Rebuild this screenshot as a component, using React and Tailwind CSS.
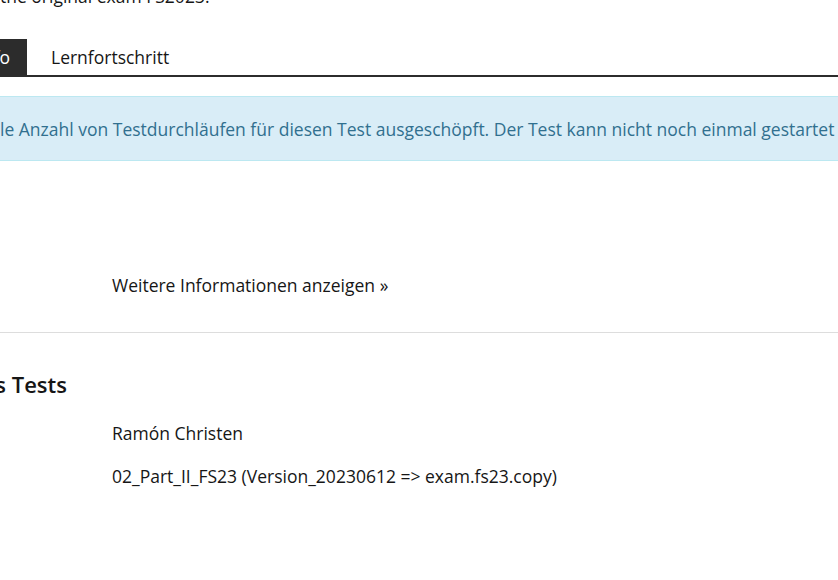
export default function App() {
  return (
    <div className="w-[838px] h-[580px] overflow-hidden bg-white text-[#161616] text-[17.5px] leading-[26px]" style={{ fontFamily: '"Open Sans", "Liberation Sans", sans-serif' }}>
      {/* intro text, mostly scrolled out of view */}
      <p className="-mt-[17px] whitespace-nowrap">the original exam FS2023.</p>

      {/* tabs */}
      <div className="mt-[30px] flex border-b-2 border-[#2c2c2c]">
        <div className="h-[36px] w-[27px] shrink-0 bg-[#2c2c2c] text-white flex items-center justify-end pr-[17px] whitespace-nowrap">
          Info
        </div>
        <div className="h-[36px] pl-[24px] flex items-center whitespace-nowrap">Lernfortschritt</div>
      </div>

      {/* info alert */}
      <div className="mt-[19px] h-[65px] border-y border-[#bce8f1] bg-[#d9edf7] text-[#31708f] flex items-center whitespace-nowrap">
        <span className="w-0 shrink-0 flex justify-end">Sie haben die maxima</span>
        <span>le Anzahl von Testdurchläufen für diesen Test ausgeschöpft. Der Test kann nicht noch einmal gestartet werden.</span>
      </div>

      <div className="pt-[111px] pl-[112px]">
        <span>Weitere Informationen anzeigen »</span>
      </div>

      <div className="mt-[34px] border-t border-[#dddddd]" />

      <div className="mt-[36px] flex">
        <h2 className="w-[67px] shrink-0 flex justify-end whitespace-nowrap text-[22px] leading-[30px] font-semibold">
          Daten des Tests
        </h2>
      </div>

      <div className="mt-[21px] pl-[112px] flex flex-col gap-[17px]">
        <div>Ramón Christen</div>
        <div>02_Part_II_FS23 (Version_20230612 =&gt; exam.fs23.copy)</div>
      </div>
    </div>
  );
}
